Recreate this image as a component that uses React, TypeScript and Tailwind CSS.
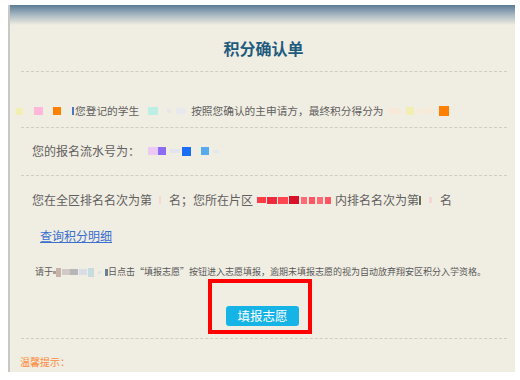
import React from "react";

const Blk = ({ w, h, c, ml = 0 }: { w: number; h: number; c: string; ml?: number }) => (
  <span
    className="inline-block align-middle"
    style={{ width: w, height: h, background: c, marginLeft: ml }}
  />
);

export default function App() {
  const font = { fontFamily: '"Noto Sans CJK SC", "Microsoft YaHei", sans-serif' };
  return (
    <div className="w-[520px] h-[380px] bg-white pt-[5px] pl-[8px] overflow-hidden" style={font}>
      <div className="w-[507px] h-[367px] bg-[#f0ede2] border-l-2 border-[#c9c9c4] flex flex-col">
        <div className="h-[20px] bg-gradient-to-b from-[#5b7c97] via-[#a9b9c2] to-[#f0ede2]" />
        {/* title */}
        <div className="h-[46px] pt-[13px] text-center">
          <div className="text-[16px] leading-[20px] font-bold text-[#1f5b7d] pl-[2px]">积分确认单</div>
        </div>
        <div className="ml-[11px] mr-[8px] border-t border-dashed border-[#cfcdc4]" />
        {/* row 1 */}
        <div className="h-[55px] pt-[23px] pl-[6px] text-[10.7px] leading-[16px] text-[#606060] flex items-center">
          <Blk w={7} h={7} c="#f2eeb4" />
          <Blk w={9} h={8} c="#ffb8da" ml={11} />
          <Blk w={8} h={8} c="#ff8000" ml={10} />
          <Blk w={2} h={8} c="#4a78b8" ml={11} />
          <span className="ml-[1px]">您登记的学生</span>
          <Blk w={10} h={8} c="#bdeee6" ml={9} />
          <Blk w={4} h={4} c="#e4e6ea" ml={9} />
          <Blk w={10} h={6} c="#e8e9ec" ml={5} />
          <span className="ml-[5px]">按照您确认的主申请方，最终积分得分为</span>
          <Blk w={12} h={6} c="#f6e9da" ml={5} />
          <Blk w={8} h={8} c="#f1edb3" ml={5} />
          <Blk w={16} h={6} c="#f5ebd8" ml={4} />
          <Blk w={10} h={10} c="#ff8000" ml={5} />
        </div>
        <div className="ml-[11px] mr-[8px] border-t border-dashed border-[#cfcdc4]" />
        {/* row 2 */}
        <div className="h-[47px] pt-[15px] pl-[22px] text-[12px] leading-[16px] text-[#606060] flex items-start">
          <span>您的报名流水号为：</span>
          <span className="flex items-center h-[16px]">
            <Blk w={10} h={8} c="#ebc9f4" ml={8} />
            <Blk w={8} h={8} c="#8b6cf3" />
            <Blk w={10} h={4} c="#e3e4ee" ml={4} />
            <Blk w={9} h={9} c="#1a6ef5" ml={2} />
            <Blk w={8} h={8} c="#58aaf0" ml={10} />
            <Blk w={6} h={3} c="#e4e8ee" ml={4} />
          </span>
        </div>
        <div className="ml-[11px] mr-[8px] border-t border-dashed border-[#cfcdc4]" />
        {/* row 3 */}
        <div className="pt-[16px] pl-[22px] text-[12px] leading-[16px] text-[#606060] flex items-center">
          <span>您在全区排名名次为第</span>
          <Blk w={2} h={8} c="#f7d9d2" ml={7} />
          <span className="ml-[8px]">名；您所在片区</span>
          <span className="ml-[4px] flex items-center gap-[1px]">
            <Blk w={9} h={6} c="#ff3b48" />
            <Blk w={10} h={7} c="#f02a3c" />
            <Blk w={10} h={7} c="#ff4650" />
            <Blk w={10} h={8} c="#d8102a" />
            <Blk w={6} h={7} c="#ff6a75" ml={1} />
            <Blk w={6} h={7} c="#ff5562" ml={1} />
            <Blk w={6} h={7} c="#ff6a75" ml={1} />
            <Blk w={6} h={7} c="#ff5562" ml={1} />
          </span>
          <span className="ml-[4px]">内排名名次为第</span>
          <Blk w={2} h={9} c="#6b6b55" />
          <Blk w={3} h={6} c="#f6d6d4" ml={8} />
          <span className="ml-[8px]">名</span>
        </div>
        {/* link */}
        <div className="mt-[20px] pl-[30px] text-[12px] leading-[16px]">
          <a className="text-[#3a6fd0] underline cursor-pointer">查询积分明细</a>
        </div>
        {/* notice */}
        <div className="mt-[22px] pl-[25px] text-[9px] leading-[12px] text-[#5a5a5a] flex items-center whitespace-nowrap">
          <span>请于</span>
          <span className="flex items-center">
            <Blk w={3} h={3} c="#a89e94" />
            <Blk w={5} h={9} c="#c7b3a8" />
            <Blk w={8} h={6} c="#cfc9c8" ml={1} />
            <Blk w={8} h={6} c="#b5b5ba" />
            <Blk w={8} h={6} c="#d9dde4" ml={1} />
            <Blk w={6} h={9} c="#c8dce0" ml={1} />
            <Blk w={3} h={3} c="#e2e2e2" ml={4} />
            <Blk w={3} h={7} c="#6d7e9a" ml={4} />
          </span>
          <span>日点击“填报志愿”按钮进入志愿填报，逾期未填报志愿的视为自动放弃翔安区积分入学资格。</span>
        </div>
        {/* red box */}
        <div className="mt-[1px] ml-[198px] w-[104px] h-[55px] border-4 border-[#ff0000] pt-[19px] pl-[14px]">
          <button className="w-[73px] h-[20px] rounded-[3px] bg-[#16b3e6] text-white text-[12.5px] leading-[20px] text-center" style={font}>
            填报志愿
          </button>
        </div>
        <div className="mt-[4px] ml-[11px] mr-[8px] border-t border-dashed border-[#cfcdc4]" />
        <div className="mt-[17px] pl-[10px] text-[10px] leading-[12px] text-[#ff8a3a]">温馨提示：</div>
      </div>
    </div>
  );
}
